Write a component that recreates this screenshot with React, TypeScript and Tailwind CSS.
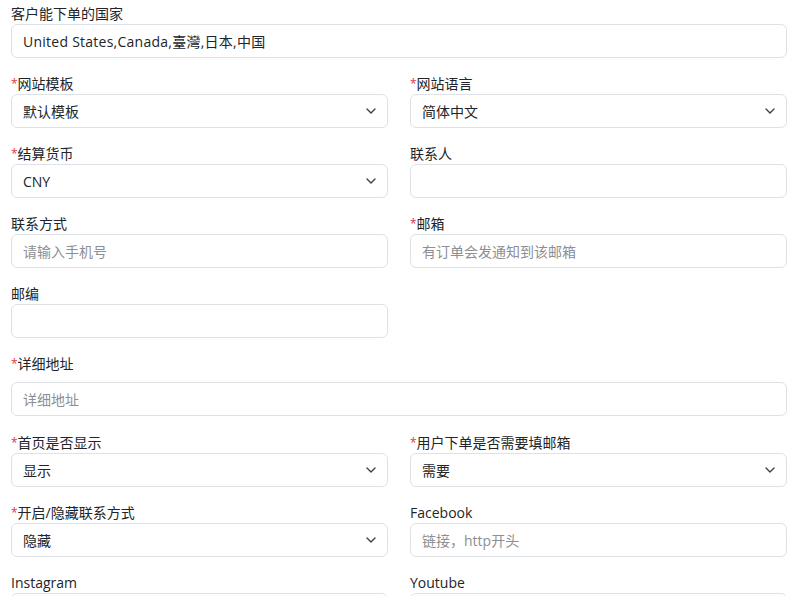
import type { ReactNode } from "react";

const font = "font-['Open_Sans','Noto_Sans_CJK_SC',sans-serif]";

const Label = ({ children, required, className = "" }: { children: ReactNode; required?: boolean; className?: string }) => (
  <label className={`block text-[14px] leading-[21px] text-[#212529] ${className}`}>
    {required && <span className="text-[#dc3545] text-[12px] align-top">*</span>}
    {children}
  </label>
);

const inputCls =
  "block w-full h-[34px] rounded-[6px] border border-[#dee2e6] bg-white px-[11px] text-[14px] text-[#212529] placeholder:text-[#8c8f93] outline-none";

const TextField = ({
  label,
  required,
  placeholder,
  value,
  labelClass,
  inputClass = "",
}: {
  label: string;
  required?: boolean;
  placeholder?: string;
  value?: string;
  labelClass?: string;
  inputClass?: string;
}) => (
  <div>
    <Label required={required} className={labelClass}>{label}</Label>
    <input className={`${inputCls} ${inputClass}`} placeholder={placeholder} defaultValue={value} />
  </div>
);

const SelectField = ({ label, required, value }: { label: string; required?: boolean; value: string }) => (
  <div>
    <Label required={required}>{label}</Label>
    <div className="relative">
      <select className={`${inputCls} appearance-none pr-8`} defaultValue={value}>
        <option>{value}</option>
      </select>
      <svg
        className="pointer-events-none absolute right-[12px] top-1/2 -translate-y-1/2"
        width="10"
        height="6"
        viewBox="0 0 10 6"
        fill="none"
      >
        <path d="M1 1l4 4 4-4" stroke="#3d4248" strokeWidth="1.4" strokeLinecap="round" strokeLinejoin="round" />
      </svg>
    </div>
  </div>
);

export default function App() {
  return (
    <div className={`${font} bg-white min-h-screen px-[11px] pt-[3px]`}>
      <div className="grid grid-cols-2 gap-x-[22px] gap-y-[15px]">
        <div className="col-span-2">
          <TextField
            label="客户能下单的国家"
            value="United States,Canada,臺灣,日本,中国"
            inputClass="tracking-[0.25px]"
          />
        </div>
        <SelectField label="网站模板" required value="默认模板" />
        <SelectField label="网站语言" required value="简体中文" />
        <SelectField label="结算货币" required value="CNY" />
        <TextField label="联系人" />
        <TextField label="联系方式" placeholder="请输入手机号" />
        <TextField label="邮箱" required placeholder="有订单会发通知到该邮箱" />
        <TextField label="邮编" />
        <div />
        <div className="col-span-2 mb-[1px]">
          <TextField label="详细地址" required placeholder="详细地址" labelClass="mb-[8px]" />
        </div>
        <SelectField label="首页是否显示" required value="显示" />
        <SelectField label="用户下单是否需要填邮箱" required value="需要" />
        <SelectField label="开启/隐藏联系方式" required value="隐藏" />
        <TextField label="Facebook" placeholder="链接，http开头" />
        <TextField label="Instagram" placeholder="" />
        <TextField label="Youtube" placeholder="" />
      </div>
    </div>
  );
}
